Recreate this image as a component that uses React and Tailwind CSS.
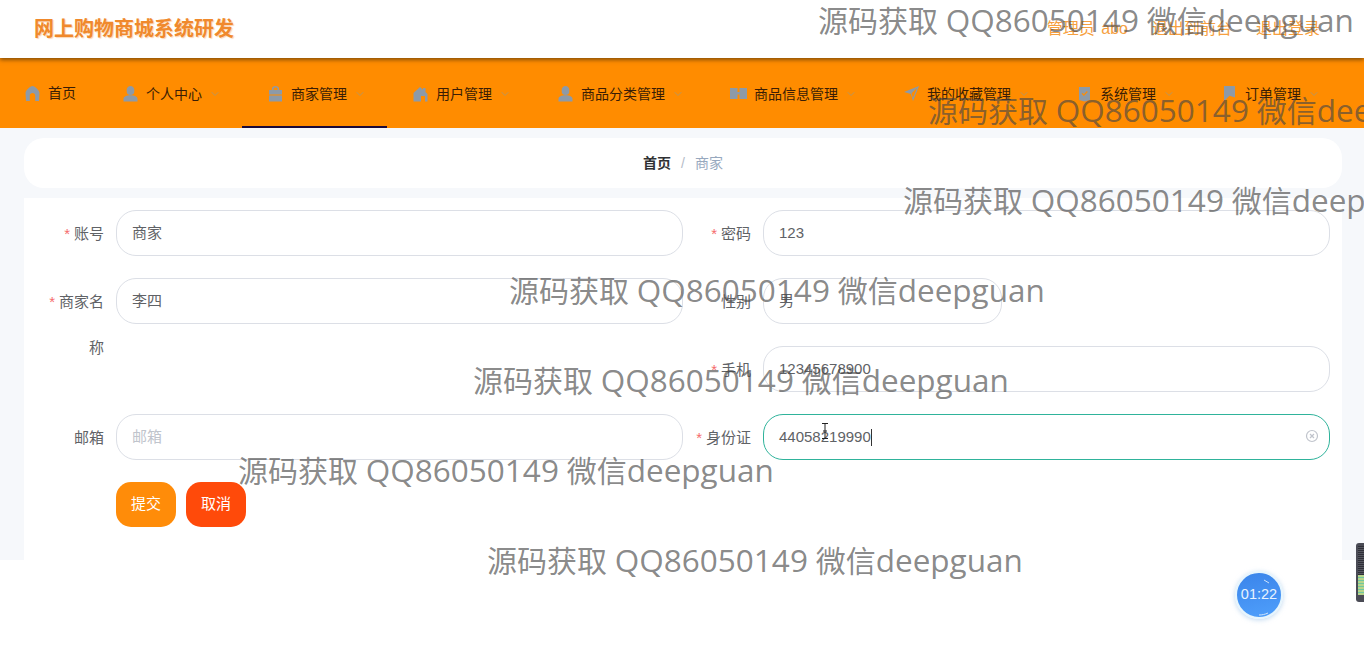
import { ChevronDown } from 'lucide-react';

const font = { fontFamily: '"Liberation Sans", "Noto Sans CJK SC", sans-serif' };

function Icon({ name }) {
    const paths = {
        home: 'M8.5 1 C11 1.6 15 4.6 15.5 8 L15 16 H11.2 V10.5 C11.2 9 10 8 8.5 8 C7 8 5.8 9 5.8 10.5 V16 H2 L1.5 8 C2 4.6 6 1.6 8.5 1 Z',
        user: 'M8.5 1a3.8 3.8 0 0 1 3.8 4v1.2a3.8 3.8 0 0 1-7.6 0V5a3.8 3.8 0 0 1 3.8-4Zm-7 15.5v-2.6c0-2.2 3-3.6 7-3.6s7 1.4 7 3.6v2.6Z',
        bag: 'M5 5V3.5C5 2 6.5 1 8.5 1S12 2 12 3.5V5h3v11.5H2V5Zm1.5 0h4V3.6c0-.7-.9-1.2-2-1.2s-2 .5-2 1.2Z M2 9.5h13v1H2Z',
        shop: 'M1.5 8 8 2l3 2.7V3h2.5v3.9L15.5 9v7.5h-14ZM9 11h4v5.5H9Z',
        video: 'M0 3h7.5v4L9.5 7V3H17v11H9.5V9.5H7.5V14H0Z',
        send: 'M16 1 10 16 8 9 1 7Zm-1.8 1.8L8.6 8.2 9.9 13Z',
        check: 'M3 2h11v13l-5.5 1.5L3 15Zm2.6 6.7 2.3 2.4 3.9-4.2-.9-.8-3 3.2-1.4-1.5Z',
        flag: 'M3 1h11v11.5L8.5 10.8 3 16Z',
    };
    return (
        <svg width="17" height="17" viewBox="0 0 17 17" fill="#8d9aa8" fillRule="evenodd" className="shrink-0">
            <path d={paths[name]} />
        </svg>
    );
}

const navItems = [
    { label: '首页', icon: 'home', w: 'w-[97px] pl-6', plain: true },
    { label: '个人中心', icon: 'user', w: 'w-[145px] pl-[25px]' },
    { label: '商家管理', icon: 'bag', w: 'w-[145px] pl-[25px]', active: true },
    { label: '用户管理', icon: 'shop', w: 'w-[145px] pl-[25px]' },
    { label: '商品分类管理', icon: 'user', w: 'w-[173px] pl-[25px]' },
    { label: '商品信息管理', icon: 'video', w: 'w-[173px] pl-[25px]' },
    { label: '我的收藏管理', icon: 'send', w: 'w-[173px] pl-[25px]' },
    { label: '系统管理', icon: 'check', w: 'w-[145px] pl-[25px]' },
    { label: '订单管理', icon: 'flag', w: 'w-[145px] pl-[25px]' },
];

const watermarks = [
    'left-[818px] -top-px',
    'left-[928px] top-[89px]',
    'left-[903px] top-[179px]',
    'left-[509px] top-[269px]',
    'left-[473px] top-[359px]',
    'left-[238px] top-[449px]',
    'left-[487px] top-[539px]',
];

function Field({ label, required, value, placeholder, focused, short, className = '' }) {
    return (
        <div className={`flex items-start ${className}`}>
            <label className="w-20 shrink-0 translate-y-px pr-3 text-right text-[15px] leading-[46px] text-[#606266]">
                {required && <span className="mr-1 text-[#f56c6c]">*</span>}
                {label}
            </label>
            <div className={`relative flex h-[46px] items-center rounded-[20px] border bg-white px-[15px] pt-px text-[15px] ${short ? 'w-[239px]' : 'flex-1'} ${focused ? 'border-[#2fb39b]' : 'border-[#dcdfe6]'}`}>
                {value ? <span className="text-[#606266]">{value}</span> : <span className="text-[#c0c4cc]">{placeholder}</span>}
                {focused && <span className="h-[17px] w-px bg-[#333]" />}
                {focused && (
                    <svg width="14" height="14" viewBox="0 0 14 14" fill="none" stroke="#c0c4cc" className="absolute right-[10px] top-[14px]">
                        <circle cx="7" cy="7" r="5.5" strokeWidth="1.2" />
                        <path d="M5 5l4 4M9 5l-4 4" strokeWidth="1.2" />
                    </svg>
                )}
            </div>
        </div>
    );
}

export default function App() {
    return (
        <div className="relative h-[654px] overflow-hidden bg-white" style={font}>
            <div className="relative z-10 flex h-[58px] items-center justify-between bg-white pl-[34px] pr-11 shadow-[0_2px_4px_rgba(60,40,10,0.6)]">
                <div className="text-[20px] font-bold text-[#f0892c] [text-shadow:1px_1px_1px_rgba(240,137,44,0.35)]">网上购物商城系统研发</div>
                <div className="flex items-center text-base text-[#f6a040]">
                    <span className="[word-spacing:2px]">管理员 abo</span>
                    <span className="ml-6">退出到前台</span>
                    <span className="ml-6">退出登录</span>
                </div>
            </div>

            <div className="flex h-[70px] bg-[#ff8c00]">
                {navItems.map(item => (
                    <div key={item.label} className={`relative flex h-full items-center text-sm text-[#3a1d05] ${item.w} ${item.plain ? '' : 'pt-px'}`}>
                        <Icon name={item.icon} />
                        <span className="ml-[7px]">{item.label}</span>
                        {!item.plain && <ChevronDown size={12} className="ml-[7px] text-[#b9975f]" />}
                        {item.active && <div className="absolute inset-x-0 bottom-0 h-0.5 bg-[#1a0a3a]" />}
                    </div>
                ))}
            </div>

            <div className="h-[432px] overflow-hidden bg-[#f6f8fb] pl-6 pr-[22px] pt-[10px]">
                <div className="flex h-[50px] items-center justify-center rounded-[20px] bg-white text-sm">
                    <span className="font-bold text-[#303133]">首页</span>
                    <span className="mx-[10px] text-[#b5bcc8]">/</span>
                    <span className="text-[#97a8be]">商家</span>
                </div>
                <div className="mt-[10px] h-[400px] bg-white px-3 pt-3">
                    <div className="grid grid-cols-2 gap-y-[22px]">
                        <Field label="账号" required value="商家" />
                        <Field label="密码" required value="123" />
                        <Field className="row-span-2" label={<>商家名<br />称</>} required value="李四" />
                        <Field label="性别" value="男" short />
                        <Field label="手机" required value="12345678900" />
                        <Field label="邮箱" placeholder="邮箱" />
                        <Field label="身份证" required value="44058219990" focused />
                    </div>
                    <div className="mt-[22px] flex gap-[10px] pl-20">
                        <button className="h-[45px] w-[60px] rounded-[15px] bg-[#ff8c09] text-[15px] text-white">提交</button>
                        <button className="h-[45px] w-[60px] rounded-[15px] bg-[#ff4a0a] text-[15px] text-white">取消</button>
                    </div>
                </div>
            </div>

            {/* recording timer and side widget */}
            <div className="absolute left-[1235px] top-[571px] flex h-12 w-12 items-center justify-center rounded-full border-2 border-[#e6f5fd] bg-[linear-gradient(170deg,#3a84ea,#4f9ffb)] text-[14.5px] text-[#e8f4ff] shadow-[0_1px_5px_rgba(150,190,230,0.6)]">
                01:22
                <svg width="44" height="44" viewBox="0 0 44 44" fill="none" stroke="#cfe4fb" className="absolute inset-0">
                    <path d="M27 7l5 3M22 42c3 0 6-.6 9-2" />
                </svg>
            </div>
            <div className="absolute left-[1356px] top-[543px] flex h-[59px] w-2 flex-col rounded-l-[3px] bg-[#4a4b55] py-[3px] pl-[2px]">
                <div className="h-[29px] bg-[repeating-linear-gradient(180deg,#2f3038_0,#2f3038_1px,#55565f_1px,#55565f_2px)]" />
                <div className="h-[20px] bg-[repeating-linear-gradient(180deg,#b7d48a_0,#b7d48a_2px,#6fc7a0_2px,#6fc7a0_3px)]" />
            </div>

            {/* I-beam cursor */}
            <svg width="10" height="16" viewBox="0 0 10 16" fill="none" stroke="#222" className="absolute left-[820px] top-[423px]">
                <path d="M2 .5h6M5 .5v15M2 15.5h6M3 8h4" />
            </svg>

            {watermarks.map(pos => (
                <div key={pos} className={`pointer-events-none absolute z-20 whitespace-nowrap text-[30px] leading-[42px] text-[rgba(70,70,70,0.65)] ${pos}`} style={{ fontFamily: '"Open Sans", "Noto Sans CJK SC", sans-serif' }}>
                    源码获取 <span className="text-[31.5px]">QQ86050149</span> 微信<span className="text-[31.5px]">deepguan</span>
                </div>
            ))}
        </div>
    );
}
